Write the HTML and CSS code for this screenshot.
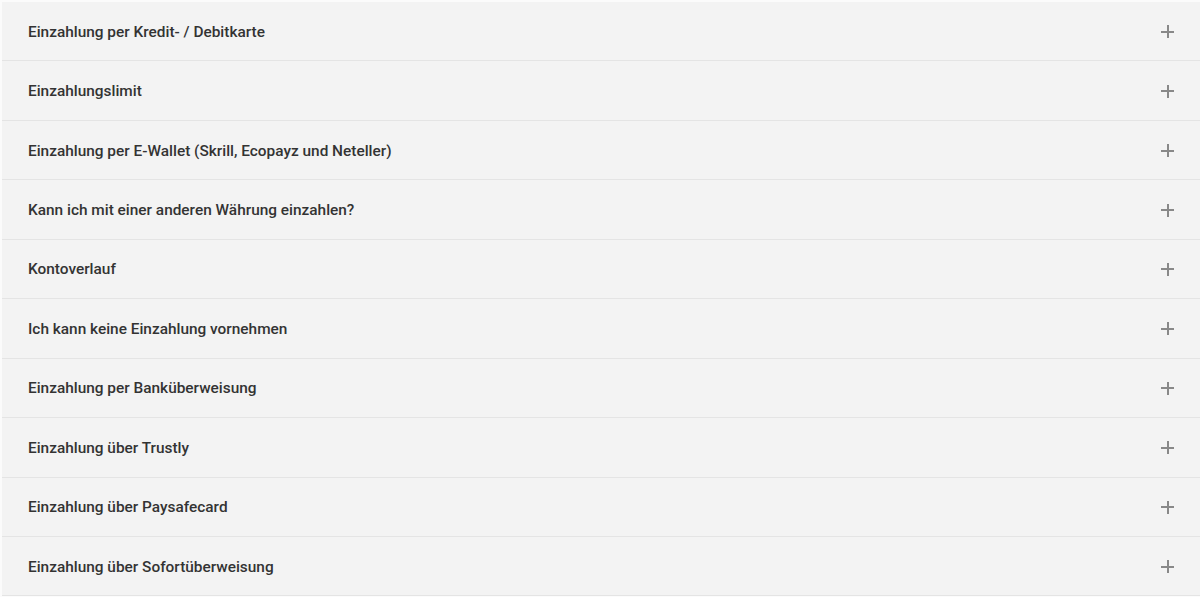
FILE: index.html
```html
<!DOCTYPE html>
<html lang="de">
<head>
  <meta charset="UTF-8" />
  <title>Einzahlung - FAQ</title>
  <link rel="stylesheet" href="styles.css">
</head>
<body>
  <ul class="faq">
    <li class="faq-item"><span class="faq-title">Einzahlung per Kredit- / Debitkarte</span><span class="faq-plus"></span></li>
    <li class="faq-item"><span class="faq-title">Einzahlungslimit</span><span class="faq-plus"></span></li>
    <li class="faq-item"><span class="faq-title">Einzahlung per E-Wallet (Skrill, Ecopayz und Neteller)</span><span class="faq-plus"></span></li>
    <li class="faq-item"><span class="faq-title">Kann ich mit einer anderen Währung einzahlen?</span><span class="faq-plus"></span></li>
    <li class="faq-item"><span class="faq-title">Kontoverlauf</span><span class="faq-plus"></span></li>
    <li class="faq-item"><span class="faq-title">Ich kann keine Einzahlung vornehmen</span><span class="faq-plus"></span></li>
    <li class="faq-item"><span class="faq-title">Einzahlung per Banküberweisung</span><span class="faq-plus"></span></li>
    <li class="faq-item"><span class="faq-title">Einzahlung über Trustly</span><span class="faq-plus"></span></li>
    <li class="faq-item"><span class="faq-title">Einzahlung über Paysafecard</span><span class="faq-plus"></span></li>
    <li class="faq-item"><span class="faq-title">Einzahlung über Sofortüberweisung</span><span class="faq-plus"></span></li>
  </ul>
</body>
</html>
```

FILE: styles.css
```css
* {
  box-sizing: border-box;
  margin: 0; padding: 0;
}
body {
  background: #fbfbfb;
  font-family: Roboto, 'Liberation Sans', sans-serif;
  color: #333;
}
.faq {
  list-style: none;
  padding: 2px 0 0 2px;
}
.faq-item {
  height: 59.44px;
  display: flex;
  align-items: center;
  justify-content: space-between;
  padding: 1px 26px 0 26px;
  background: #f3f3f3;
  border-bottom: 1px solid #e4e4e4;
  cursor: pointer;
}
.faq-title {
  font-size: 15.4px;
  font-weight: 500;
  color: #333;
}
.faq-plus {
  position: relative;
  width: 13px;
  height: 13px;
}
.faq-plus::before,
.faq-plus::after {
  content: '';
  position: absolute;
  background: #888;
}
.faq-plus::before {
  left: 0; right: 0;
  top: 5.5px;
  height: 2px;
}
.faq-plus::after {
  top: 0; bottom: 0;
  left: 5.5px;
  width: 2px;
}
```
